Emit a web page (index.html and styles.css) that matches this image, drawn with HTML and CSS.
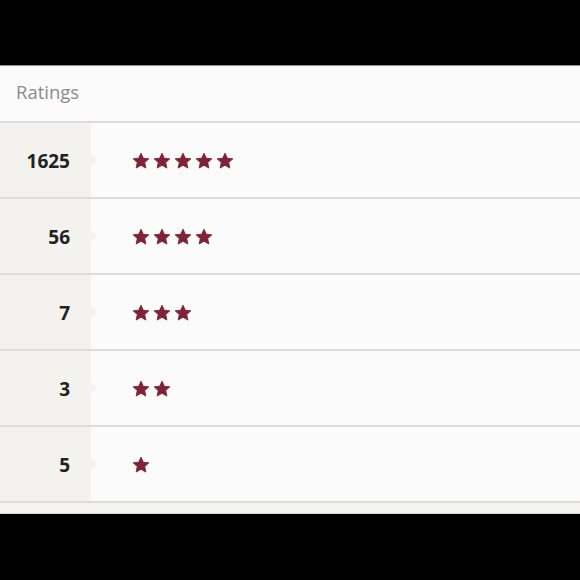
FILE: index.html
```html
<!DOCTYPE html>
<html>
<head>
<meta charset="utf-8">
<link rel="stylesheet" href="styles.css">
</head>
<body>
<div class="screen">
  <div class="bar"></div>
  <div class="card">
    <div class="header">Ratings</div>
    <div class="row">
      <div class="count">1625</div>
      <div class="stars">
        <svg class="star" viewBox="0 0 24 24"><path d="M12 1.5L15.06 8.29 22.46 9.1 16.95 14.11 18.47 21.4 12 17.7 5.53 21.4 7.05 14.11 1.54 9.1 8.94 8.29z"/></svg>
        <svg class="star" viewBox="0 0 24 24"><path d="M12 1.5L15.06 8.29 22.46 9.1 16.95 14.11 18.47 21.4 12 17.7 5.53 21.4 7.05 14.11 1.54 9.1 8.94 8.29z"/></svg>
        <svg class="star" viewBox="0 0 24 24"><path d="M12 1.5L15.06 8.29 22.46 9.1 16.95 14.11 18.47 21.4 12 17.7 5.53 21.4 7.05 14.11 1.54 9.1 8.94 8.29z"/></svg>
        <svg class="star" viewBox="0 0 24 24"><path d="M12 1.5L15.06 8.29 22.46 9.1 16.95 14.11 18.47 21.4 12 17.7 5.53 21.4 7.05 14.11 1.54 9.1 8.94 8.29z"/></svg>
        <svg class="star" viewBox="0 0 24 24"><path d="M12 1.5L15.06 8.29 22.46 9.1 16.95 14.11 18.47 21.4 12 17.7 5.53 21.4 7.05 14.11 1.54 9.1 8.94 8.29z"/></svg>
      </div>
    </div>
    <div class="row">
      <div class="count">56</div>
      <div class="stars">
        <svg class="star" viewBox="0 0 24 24"><path d="M12 1.5L15.06 8.29 22.46 9.1 16.95 14.11 18.47 21.4 12 17.7 5.53 21.4 7.05 14.11 1.54 9.1 8.94 8.29z"/></svg>
        <svg class="star" viewBox="0 0 24 24"><path d="M12 1.5L15.06 8.29 22.46 9.1 16.95 14.11 18.47 21.4 12 17.7 5.53 21.4 7.05 14.11 1.54 9.1 8.94 8.29z"/></svg>
        <svg class="star" viewBox="0 0 24 24"><path d="M12 1.5L15.06 8.29 22.46 9.1 16.95 14.11 18.47 21.4 12 17.7 5.53 21.4 7.05 14.11 1.54 9.1 8.94 8.29z"/></svg>
        <svg class="star" viewBox="0 0 24 24"><path d="M12 1.5L15.06 8.29 22.46 9.1 16.95 14.11 18.47 21.4 12 17.7 5.53 21.4 7.05 14.11 1.54 9.1 8.94 8.29z"/></svg>
      </div>
    </div>
    <div class="row">
      <div class="count">7</div>
      <div class="stars">
        <svg class="star" viewBox="0 0 24 24"><path d="M12 1.5L15.06 8.29 22.46 9.1 16.95 14.11 18.47 21.4 12 17.7 5.53 21.4 7.05 14.11 1.54 9.1 8.94 8.29z"/></svg>
        <svg class="star" viewBox="0 0 24 24"><path d="M12 1.5L15.06 8.29 22.46 9.1 16.95 14.11 18.47 21.4 12 17.7 5.53 21.4 7.05 14.11 1.54 9.1 8.94 8.29z"/></svg>
        <svg class="star" viewBox="0 0 24 24"><path d="M12 1.5L15.06 8.29 22.46 9.1 16.95 14.11 18.47 21.4 12 17.7 5.53 21.4 7.05 14.11 1.54 9.1 8.94 8.29z"/></svg>
      </div>
    </div>
    <div class="row">
      <div class="count">3</div>
      <div class="stars">
        <svg class="star" viewBox="0 0 24 24"><path d="M12 1.5L15.06 8.29 22.46 9.1 16.95 14.11 18.47 21.4 12 17.7 5.53 21.4 7.05 14.11 1.54 9.1 8.94 8.29z"/></svg>
        <svg class="star" viewBox="0 0 24 24"><path d="M12 1.5L15.06 8.29 22.46 9.1 16.95 14.11 18.47 21.4 12 17.7 5.53 21.4 7.05 14.11 1.54 9.1 8.94 8.29z"/></svg>
      </div>
    </div>
    <div class="row">
      <div class="count">5</div>
      <div class="stars">
        <svg class="star" viewBox="0 0 24 24"><path d="M12 1.5L15.06 8.29 22.46 9.1 16.95 14.11 18.47 21.4 12 17.7 5.53 21.4 7.05 14.11 1.54 9.1 8.94 8.29z"/></svg>
      </div>
    </div>
    <div class="footer"></div>
  </div>
  <div class="bar bottom"></div>
</div>
</body>
</html>
```
FILE: styles.css
```css
* { box-sizing: border-box; }
html, body { margin: 0; padding: 0; background: #000; }
.screen {
  width: 580px;
  height: 580px;
  display: flex;
  flex-direction: column;
  background: #000;
  font-family: "Open Sans", Lato, sans-serif;
}
.bar { height: 65px; background: #000; flex: none; }
.bar.bottom { flex: 1; height: auto; }
.card {
  background: #fbfbfb;
  border-top: 1px solid #8e8e8e;
  flex: none;
}
.header {
  height: 57px;
  padding: 13px 0 0 16px;
  font-size: 18.5px;
  color: #8c8a87;
  border-bottom: 2px solid #dcdbd9;
}
.row {
  display: flex;
  height: 76px;
  border-bottom: 2px solid #dedcdc;
}
.count {
  position: relative;
  width: 91px;
  flex: none;
  background: #f3f2ef;
  display: flex;
  align-items: center;
  justify-content: flex-end;
  padding-right: 21px;
  padding-top: 1px;
  font-weight: 700;
  font-size: 19px;
  color: #222;
}
.count::after {
  content: "";
  position: absolute;
  right: -6px;
  top: 50%;
  margin-top: -6px;
  border-top: 6px solid transparent;
  border-bottom: 6px solid transparent;
  border-left: 6px solid #f3f2ef;
}
.stars {
  display: flex;
  align-items: center;
  gap: 3px;
  padding-left: 41px;
  padding-top: 2px;
}
.star {
  width: 18px;
  height: 18px;
  fill: #7e2235;
  stroke: #7e2235;
  stroke-width: 1.2;
  stroke-linejoin: round;
}
.footer {
  height: 11px;
  background: #f4f3f0;
  border-bottom: 1px solid #d6d5d2;
}
```
